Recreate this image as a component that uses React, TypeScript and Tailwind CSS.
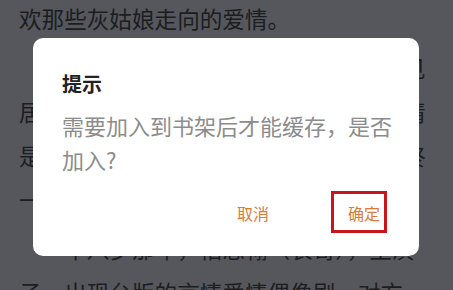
import React from 'react';

const font = { fontFamily: '"Noto Sans CJK SC", "Noto Sans", sans-serif' };

const page: string[][] = [
  ['欢那些灰姑娘走向的爱情。'],
  [
    '　　她从小就喜欢看言情小说，梦想着见',
    '居然在这个年纪遇到了属于自己的真爱情',
    '是她以为，这一切都只是美好的开始而终',
    '一场空。',
  ],
  ['　　十八岁那年，柏思翰（表哥），主演', '子，出现台版的言情爱情偶像剧，对方'],
];

const ConfirmDialog: React.FC = () => {
  return (
    <div className="absolute left-[33px] top-[38px] w-[386px] h-[218px] bg-white rounded-[10px] px-[29px] pt-[32px]">
      <h3 className="text-[20px] leading-[28px] font-bold text-[#222222]">提示</h3>
      <p className="mt-[10px] text-[22px] leading-[34px] text-[#8c8c8c] whitespace-nowrap">
        需要加入到书架后才能缓存，是否
        <br />
        加入?
      </p>
      <div className="mt-[25px] flex justify-end items-center gap-[79px] pr-[10px]">
        <button className="text-[16px] leading-[24px] text-[#dc7a3a]">取消</button>
        <button className="relative text-[16px] leading-[24px] text-[#dc7a3a]">
          确定
          <span className="absolute -left-[17px] -right-[7px] -top-[10px] -bottom-[8px] border-[3px] border-[#c8161d]" />
        </button>
      </div>
    </div>
  );
};

export default function App() {
  return (
    <div className="relative w-[453px] h-[290px] overflow-hidden bg-[#55575d]" style={font}>
      <div className="px-[19px] -mt-[3px] text-[22.6px] leading-[44px] text-[#1c1d20]">
        {page.map((para, i) => (
          <div key={i} className={i > 0 ? 'mt-[5px]' : ''}>
            {para.map((line, j) => (
              <div key={j} className="whitespace-nowrap">
                {line}
              </div>
            ))}
          </div>
        ))}
      </div>
      <ConfirmDialog />
    </div>
  );
}
